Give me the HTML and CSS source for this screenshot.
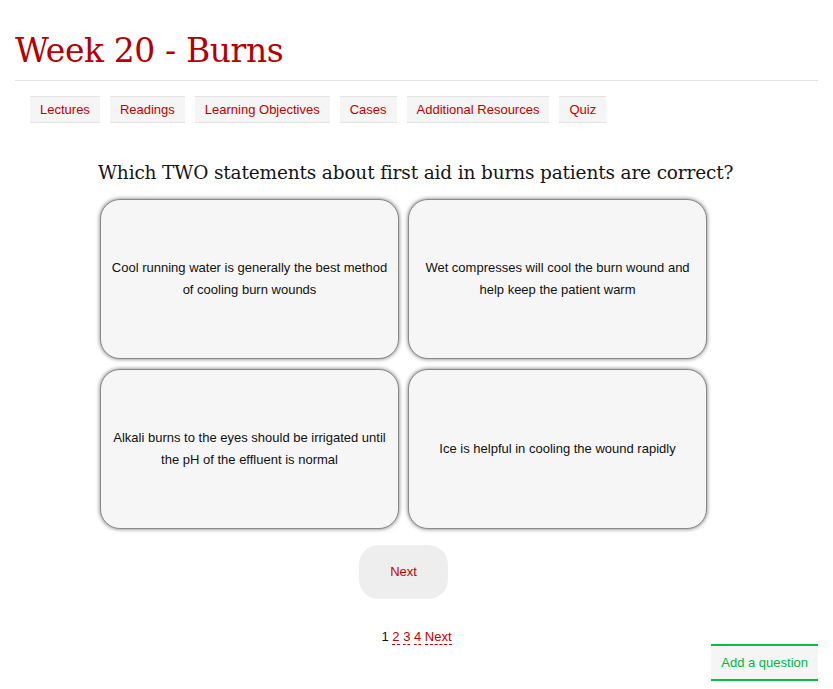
FILE: index.html
```html
<!DOCTYPE html>
<html>
<head>
<meta charset="utf-8">
<link rel="stylesheet" href="styles.css">
</head>
<body>
<div class="page">
  <h1 class="title">Week 20 - Burns</h1>
  <nav class="tabs">
    <a class="tab" href="#">Lectures</a>
    <a class="tab" href="#">Readings</a>
    <a class="tab" href="#">Learning Objectives</a>
    <a class="tab" href="#">Cases</a>
    <a class="tab" href="#">Additional Resources</a>
    <a class="tab" href="#">Quiz</a>
  </nav>
  <section class="quiz">
    <h2 class="question">Which TWO statements about first aid in burns patients are correct?</h2>
    <div class="answers">
      <div class="card">Cool running water is generally the best method of cooling burn wounds</div>
      <div class="card">Wet compresses will cool the burn wound and help keep the patient warm</div>
      <div class="card">Alkali burns to the eyes should be irrigated until the pH of the effluent is normal</div>
      <div class="card">Ice is helpful in cooling the wound rapidly</div>
    </div>
    <div class="next-row"><a class="next-btn" href="#">Next</a></div>
  </section>
  <div class="pager">
    <span class="current">1</span>
    <a href="#">2</a>
    <a href="#">3</a>
    <a href="#">4</a>
    <a href="#">Next</a>
  </div>
  <div class="add-row"><a class="add-btn" href="#">Add a question</a></div>
</div>
</body>
</html>
```
FILE: styles.css
```css
html, body {
  margin: 0;
  padding: 0;
  background: #fff;
}
body {
  font-family: "Liberation Sans", Arial, sans-serif;
  font-size: 13px;
  color: #111;
}
.page {
  padding: 0 15px 0 15px;
}
.title {
  font-family: "DejaVu Serif", "Liberation Serif", serif;
  font-weight: normal;
  font-size: 33px;
  color: #b30000;
  margin: 0;
  padding: 32px 0 10px 0;
  line-height: 38px;
  border-bottom: 1px solid #e3e3e3;
  letter-spacing: -0.4px;
}
.tabs {
  display: flex;
  gap: 10px;
  padding: 15px 0 0 15px;
}
.tab {
  display: block;
  background: #f5f5f5;
  border-top: 1px solid #e4e4e4;
  border-bottom: 1px solid #e4e4e4;
  padding: 0 10px;
  line-height: 25px;
  color: #c00000;
  text-decoration: none;
}
.quiz {
  width: 637px;
  margin: 0 auto;
  padding-top: 38px;
}
.question {
  font-family: "DejaVu Serif", "Liberation Serif", serif;
  font-weight: normal;
  font-size: 18.5px;
  color: #151515;
  margin: 0 0 14px 0;
  line-height: 24px;
  letter-spacing: -0.15px;
  white-space: nowrap;
}
.answers {
  display: grid;
  grid-template-columns: 299px 299px;
  gap: 10px 9px;
  padding-left: 2px;
}
.card {
  height: 160px;
  box-sizing: border-box;
  background: #f6f6f6;
  border: 1px solid #8a8a8a;
  border-radius: 20px;
  box-shadow: 0 0 4px rgba(0, 0, 0, 0.55);
  display: flex;
  align-items: center;
  justify-content: center;
  text-align: center;
  padding: 0 10px;
  line-height: 22px;
  color: #111;
}
.next-row {
  width: 611px;
  display: flex;
  justify-content: center;
  padding-top: 16px;
}
.next-btn {
  display: block;
  width: 89px;
  height: 54px;
  line-height: 54px;
  text-align: center;
  background: #eeeeee;
  border-radius: 20px;
  color: #c00000;
  text-decoration: none;
}
.pager {
  text-align: center;
  margin-top: 30px;
  line-height: 16px;
}
.pager .current {
  color: #111;
}
.pager a {
  color: #c00000;
  text-decoration: none;
  border-bottom: 1px dashed #c00000;
}
.add-row {
  display: flex;
  justify-content: flex-end;
  margin-top: -1px;
}
.add-btn {
  display: block;
  background: #f5f5f5;
  border-top: 2px solid #00c040;
  border-bottom: 2px solid #00c040;
  padding: 0 10px;
  line-height: 33px;
  color: #00b83a;
  text-decoration: none;
}
```
